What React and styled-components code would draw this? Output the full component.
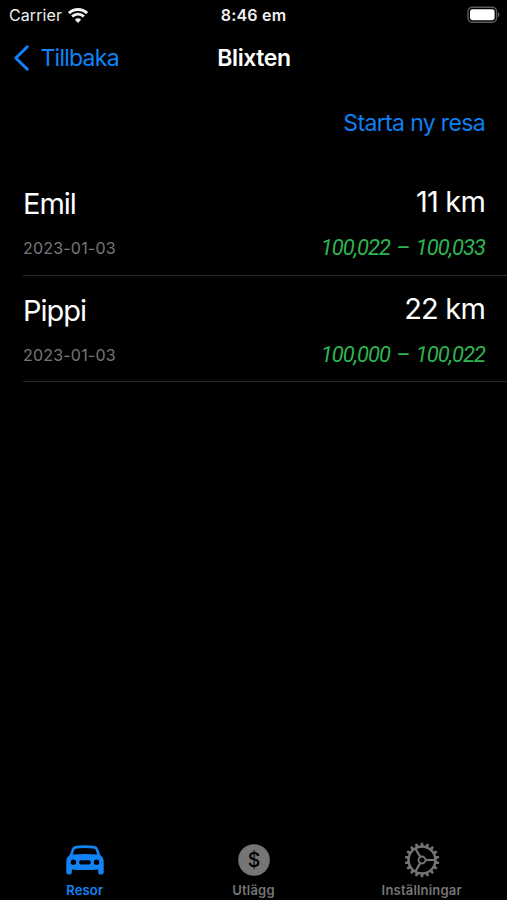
import React from 'react'
import styled, { createGlobalStyle } from 'styled-components';

const trips = [
    { driver: 'Emil', date: '2023-01-03', distance: '11 km', from: '100,022', to: '100,033' },
    { driver: 'Pippi', date: '2023-01-03', distance: '22 km', from: '100,000', to: '100,022' },
]

function WifiIcon() {
    return (
        <svg width="20" height="15" viewBox="0 0 20 15" fill="none" stroke="#f2f2f2">
            <path d="M0.9 5.1a13.2 13.2 0 0 1 18.2 0" strokeWidth="2.9" />
            <path d="M4.1 8.6a8.4 8.4 0 0 1 11.8 0" strokeWidth="2.8" />
            <path d="M10 14.9l-3.1-3.1a4.5 4.5 0 0 1 6.2 0z" fill="#f2f2f2" stroke="none" />
        </svg>
    )
}

function BatteryIcon() {
    return (
        <svg width="34" height="18" viewBox="0 0 34 18">
            <rect x="1" y="1.2" width="28.6" height="15" rx="4.4" fill="none" stroke="#5c5c5c" strokeWidth="1.4" />
            <rect x="3" y="3.2" width="24.6" height="11" rx="2.4" fill="#fff" />
            <path d="M31 6.3c1.9.8 1.9 4 0 4.8z" fill="#606060" />
        </svg>
    )
}

function CarIcon() {
    return (
        <svg width="38" height="30" viewBox="0 0 38 30">
            <path
                fill="currentColor"
                fillRule="evenodd"
                d="M10.2 0.8Q19 -0.4 27.8 0.8C30.3 1.1 31.4 2.2 32.2 4.2L34.3 9.9C36.8 12 37.7 13.5 37.7 16.8V27.4Q37.7 29.4 35.7 29.4H34.2Q32.2 29.4 32.2 27.4V24.6Q19 25.6 5.8 24.6V27.4Q5.8 29.4 3.8 29.4H2.3Q0.3 29.4 0.3 27.4V16.8C0.3 13.5 1.2 12 3.7 9.9L5.8 4.2C6.6 2.2 7.7 1.1 10.2 0.8ZM10.6 3.4C9.2 3.6 8.7 4.1 8.2 5.3L6.8 9.5Q19 8.4 31.2 9.5L29.8 5.3C29.3 4.1 28.8 3.6 27.4 3.4Q19 2.4 10.6 3.4ZM7.4 14.6a2.7 2.7 0 1 0 0 5.4a2.7 2.7 0 1 0 0 -5.4ZM30.6 14.6a2.7 2.7 0 1 0 0 5.4a2.7 2.7 0 1 0 0 -5.4ZM15.2 15.3a2.1 2.1 0 0 0 0 4.2H22.8a2.1 2.1 0 0 0 0 -4.2Z"
            />
        </svg>
    )
}

function CoinIcon() {
    return (
        <svg width="32" height="32" viewBox="0 0 32 32">
            <circle cx="16" cy="16" r="15.8" fill="currentColor" />
            <text x="16" y="22.9" textAnchor="middle" fontFamily="Inter, sans-serif" fontSize="19.5" fontWeight="500" fill="#000">$</text>
        </svg>
    )
}

function GearIcon() {
    const teeth = Array.from({ length: 18 }, (_, i) => i * 20 + 10)
    return (
        <svg width="36" height="36" viewBox="-18 -18 36 36" fill="none" stroke="currentColor">
            <circle r="13.4" strokeWidth="2.4" />
            <circle r="3.5" strokeWidth="1.8" />
            {[0, 120, 240].map((a) => (
                <path key={a} d="M3.6 0H13" strokeWidth="2.2" transform={`rotate(${a})`} />
            ))}
            {teeth.map((a) => (
                <path key={a} d="M14 -1.7L17.2 -1.1V1.1L14 1.7z" fill="currentColor" stroke="none" transform={`rotate(${a})`} />
            ))}
        </svg>
    )
}

const tabs = [
    { label: 'Resor', icon: <CarIcon />, active: true },
    { label: 'Utlägg', icon: <CoinIcon /> },
    { label: 'Inställningar', icon: <GearIcon /> },
]

function App() {
    return (
        <Screen>
            <GlobalStyle />
            <StatusBar>
                <Carrier>Carrier <WifiIcon /></Carrier>
                <Clock>8:46 em</Clock>
                <Battery><BatteryIcon /></Battery>
            </StatusBar>
            <NavBar>
                <BackButton>
                    <svg width="17" height="28" viewBox="0 0 17 28" fill="none" stroke="currentColor" strokeWidth="3" strokeLinecap="round" strokeLinejoin="round">
                        <path d="M14.3 2.8L2.8 14L14.3 25.2" />
                    </svg>
                    <span>Tillbaka</span>
                </BackButton>
                <Title>Blixten</Title>
            </NavBar>
            <Actions>
                <StartButton>Starta ny resa</StartButton>
            </Actions>
            <TripList>
                {trips.map((trip) => (
                    <Trip key={trip.driver}>
                        <Line>
                            <Driver>{trip.driver}</Driver>
                            <Distance>{trip.distance}</Distance>
                        </Line>
                        <Line>
                            <TripDate>{trip.date}</TripDate>
                            <Odometer>{trip.from} – {trip.to}</Odometer>
                        </Line>
                    </Trip>
                ))}
            </TripList>
            <TabBar>
                {tabs.map((tab) => (
                    <Tab key={tab.label} $active={tab.active}>
                        <TabIcon>{tab.icon}</TabIcon>
                        <TabLabel>{tab.label}</TabLabel>
                    </Tab>
                ))}
            </TabBar>
        </Screen>
    )
}

const GlobalStyle = createGlobalStyle`
body{
margin:0;
background-color:#000;
}
svg{
display:block;
flex-shrink:0;
}
`
const Screen = styled.div`
display:flex;
flex-direction:column;
width:507px;
height:900px;
overflow:hidden;
background-color:#000;
color:#fff;
font-family:Inter, "Liberation Sans", sans-serif;
white-space:nowrap;
`
const StatusBar = styled.header`
display:grid;
grid-template-columns:1fr auto 1fr;
align-items:center;
height:30px;
font-size:16px;
line-height:30px;
color:#f0f0f0;
`
const Carrier = styled.div`
display:flex;
align-items:center;
gap:6px;
padding-left:9px;
letter-spacing:0.1px;
`
const Clock = styled.div`
font-weight:600;
letter-spacing:0.2px;
`
const Battery = styled.div`
display:flex;
justify-content:flex-end;
padding-right:6px;
`
const NavBar = styled.nav`
display:grid;
grid-template-columns:1fr auto 1fr;
align-items:center;
height:56px;
font-size:23px;
line-height:56px;
`
const BackButton = styled.a`
display:flex;
align-items:center;
gap:11px;
padding-left:12.5px;
color:#0f84fa;
letter-spacing:-0.75px;
`
const Title = styled.h1`
margin:0;
padding-left:1px;
font-size:23px;
font-weight:600;
letter-spacing:-0.4px;
`
const Actions = styled.div`
display:flex;
justify-content:flex-end;
padding:18px 22px 0 0;
`
const StartButton = styled.a`
font-size:23px;
line-height:38px;
letter-spacing:-0.65px;
color:#0f7ff0;
`
const TripList = styled.main`
display:flex;
flex-direction:column;
flex:1;
padding:27px 0 0 23px;
`
const Trip = styled.section`
box-sizing:border-box;
height:106.5px;
padding-top:11px;
border-bottom:1px solid #2b2b2d;
`
const Line = styled.div`
display:flex;
justify-content:space-between;
align-items:flex-start;
padding-right:22px;
`
const Driver = styled.div`
padding:4px 0;
font-size:29px;
line-height:40px;
letter-spacing:-1px;
`
const Distance = styled.div`
font-size:29px;
line-height:43px;
letter-spacing:-0.8px;
`
const TripDate = styled.div`
font-size:16px;
line-height:32px;
padding-top:4px;
letter-spacing:0.2px;
color:#77777b;
`
const Odometer = styled.div`
padding-top:4px;
font-family:Roboto, sans-serif;
font-size:22px;
font-style:italic;
font-weight:400;
line-height:32px;
letter-spacing:-1px;
word-spacing:2px;
color:#2db552;
`
const TabBar = styled.footer`
display:grid;
grid-template-columns:169.5px 168px 168.5px;
height:60px;
`
const Tab = styled.div`
display:flex;
flex-direction:column;
align-items:center;
color:${(props) => (props.$active ? '#1283f7' : '#757575')};
`
const TabIcon = styled.div`
display:flex;
align-items:center;
height:39px;
`
const TabLabel = styled.div`
margin-top:1px;
font-size:13px;
font-weight:600;
line-height:20px;
letter-spacing:0.2px;
`

export default App
